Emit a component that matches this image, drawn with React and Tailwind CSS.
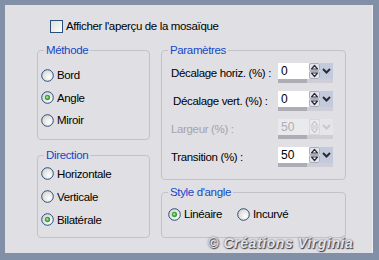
import React from 'react';

const font = { fontFamily: '"Liberation Sans", Arial, sans-serif' };
const txt = 'text-[11.5px] tracking-[-0.35px] leading-[14px] whitespace-nowrap';

function Radio({ checked }) {
  return (
    <svg width="13" height="13" viewBox="0 0 13 13" className="shrink-0">
      <defs>
        <radialGradient id="rg" cx="0.65" cy="0.65" r="0.7">
          <stop offset="0" stopColor="#ffffff" />
          <stop offset="1" stopColor="#d6d5d0" />
        </radialGradient>
      </defs>
      <circle cx="6.5" cy="6.5" r="5.8" fill="url(#rg)" stroke="#2a4f7c" strokeWidth="1" />
      {checked && (
        <>
          <circle cx="6.5" cy="6.5" r="2.7" fill="#3fa23f" />
          <circle cx="6.2" cy="6.2" r="1.2" fill="#8fe08a" />
        </>
      )}
    </svg>
  );
}

function RadioRow({ checked, label, className = '' }) {
  return (
    <div className={`flex items-center gap-[3px] ${className}`}>
      <Radio checked={checked} />
      <span className={`${txt} text-black`}>{label}</span>
    </div>
  );
}

function Group({ title, className = '', children }) {
  return (
    <div className={`relative border border-[#c3c2ca] rounded-[4px] ${className}`}>
      <span className={`absolute -top-[8px] left-[6px] px-[2px] bg-[#e0dfe4] text-[#1447c8] ${txt}`}>
        {title}
      </span>
      {children}
    </div>
  );
}

function Spin({ disabled }) {
  const arrow = disabled ? '#c8c8cc' : '#2b2b33';
  const btn = disabled ? '#eceaee' : '#e4e4ec';
  return (
    <svg width="24" height="16" viewBox="0 0 24 16">
      <rect x="0.5" y="0.5" width="10" height="7" rx="1.5" fill={btn} stroke={disabled ? '#d8d8dc' : '#a9afc0'} />
      <rect x="0.5" y="8.5" width="10" height="7" rx="1.5" fill={btn} stroke={disabled ? '#d8d8dc' : '#a9afc0'} />
      <polygon points="2.5,6 5.5,2.5 8.5,6" fill="#ffffff" stroke={arrow} strokeWidth="1.2" strokeLinejoin="round" />
      <polygon points="2.5,10 5.5,13.5 8.5,10" fill="#ffffff" stroke={arrow} strokeWidth="1.2" strokeLinejoin="round" />
      <rect x="11" y="0" width="13" height="16" fill={disabled ? '#e6e5e9' : '#c3cadb'} />
      <path d="M14 6 L17.5 9.5 L21 6" fill="none" stroke={arrow} strokeWidth="2" />
    </svg>
  );
}

function Field({ label, value, disabled, labelClass = '' }) {
  return (
    <div className="flex items-start h-[28px]">
      <span className={`w-[107px] mt-[3px] ${txt} ${disabled ? 'text-[#a4a3aa]' : 'text-black'} ${labelClass}`}>
        {label}
      </span>
      <div className="flex flex-col">
        <div className="flex">
          <div
            className={`w-[31px] h-[16px] pl-[3px] text-[12px] leading-[16px] ${
              disabled ? 'bg-[#eae9ed] text-[#aeadb4]' : 'bg-white text-black'
            }`}
          >
            {value}
          </div>
          <Spin disabled={disabled} />
        </div>
        <div className="flex h-[4px]">
          <div className="w-[29px] bg-[#aeadb6]" />
          <div className="w-[26px] bg-[#cfced6]" />
        </div>
      </div>
    </div>
  );
}

export default function App() {
  return (
    <div className="w-[379px] h-[260px] bg-[#8190a7] pl-[5px] pt-[5px] pr-[6px] pb-[7px] flex" style={font}>
      <div className="relative flex-1 bg-[#e0dfe4] border-r border-[#eeeef2] flex flex-col">
        <div className="flex items-center gap-[3px] pt-[14px] pl-[45px]">
          <svg width="13" height="13" viewBox="0 0 13 13">
            <defs>
              <linearGradient id="cb" x1="0" y1="0" x2="1" y2="1">
                <stop offset="0" stopColor="#dcdcd6" />
                <stop offset="1" stopColor="#ffffff" />
              </linearGradient>
            </defs>
            <rect x="0.5" y="0.5" width="12" height="12" fill="url(#cb)" stroke="#2a4f7c" />
          </svg>
          <span className={`${txt} text-black`}>Afficher l'aperçu de la mosaïque</span>
        </div>

        <div className="flex gap-[11px] pl-[32px] mt-[17px]">
          <div className="flex flex-col gap-[15px] w-[113px]">
            <Group title="Méthode" className="h-[90px] pt-[13px] pl-[3px]">
              <RadioRow label="Bord" className="h-[22px]" />
              <RadioRow label="Angle" checked className="h-[23px]" />
              <RadioRow label="Miroir" className="h-[22px]" />
            </Group>
            <Group title="Direction" className="h-[83px] pt-[6px] pl-[3px]">
              <RadioRow label="Horizontale" className="h-[23px]" />
              <RadioRow label="Verticale" className="h-[23px]" />
              <RadioRow label="Bilatérale" checked className="h-[23px]" />
            </Group>
          </div>

          <div className="flex flex-col gap-[12px] w-[185px]">
            <Group title="Paramètres" className="h-[130px] pt-[12px] pl-[9px]">
              <Field label="Décalage horiz. (%) :" value="0" />
              <Field label="Décalage vert. (%) :" value="0" labelClass="pl-[2px]" />
              <Field label="Largeur (%) :" value="50" disabled />
              <Field label="Transition (%) :" value="50" />
            </Group>
            <Group title="Style d'angle" className="h-[46px] pt-[10px] pl-[6px] flex items-start">
              <RadioRow label="Linéaire" checked className="h-[22px] w-[69px]" />
              <RadioRow label="Incurvé" className="h-[22px]" />
            </Group>
          </div>
        </div>

        <span className="absolute left-[203px] top-[228px] whitespace-nowrap text-[14px] font-bold italic text-[#e4e4ea] tracking-[0.6px] [text-shadow:1px_1px_1px_#3c3c44,0_0_2px_#55555e]">
          © Créations Virginia
        </span>
      </div>
    </div>
  );
}
